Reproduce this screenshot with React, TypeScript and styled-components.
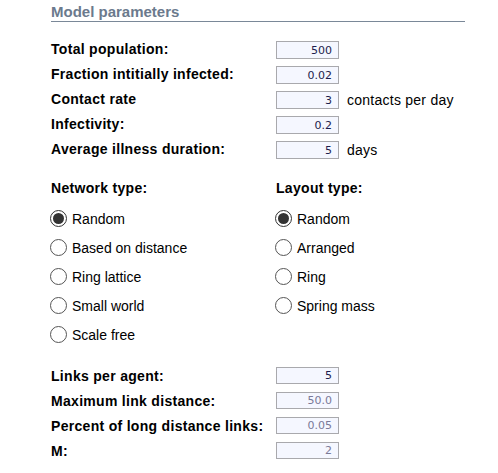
import React from "react";
import styled, { createGlobalStyle } from "styled-components";

const GlobalStyle = createGlobalStyle`
  html, body { margin: 0; padding: 0; background: #ffffff; }
  body { font-family: "Liberation Sans", Arial, sans-serif; color: #000; }
`;

const Panel = styled.div`
  width: 414px;
  padding: 4px 0 0 51px;
`;

const Header = styled.div`
  font-size: 15px;
  line-height: 16px;
  font-weight: bold;
  color: #6b7a8d;
  padding-bottom: 1px;
  border-bottom: 1px solid #7a8898;
`;

const ParamList = styled.div<{ $top: number }>`
  display: flex;
  flex-direction: column;
  margin-top: ${(p) => p.$top}px;
`;

const Row = styled.div`
  display: grid;
  grid-template-columns: 225px 63px auto;
  align-items: start;
  height: 25px;
`;

const Label = styled.div<{ $offset: number }>`
  font-size: 14px;
  line-height: 16px;
  font-weight: bold;
  letter-spacing: 0.3px;
  padding-top: ${(p) => p.$offset}px;
  white-space: nowrap;
`;

const Field = styled.div<{ $disabled?: boolean; $h: number }>`
  box-sizing: border-box;
  margin-top: 1px;
  height: ${(p) => p.$h}px;
  border: 1px solid #a9a9ad;
  background: #f5f7ff;
  display: flex;
  align-items: center;
  justify-content: flex-end;
  padding-right: 6px;
  font-family: "DejaVu Sans", Verdana, sans-serif;
  font-size: 11px;
  color: ${(p) => (p.$disabled ? "#7a7a98" : "#1d1d4d")};
`;

const Unit = styled.div`
  font-size: 14px;
  line-height: 16px;
  letter-spacing: 0.25px;
  margin-left: 8px;
  margin-top: 2px;
  white-space: nowrap;
`;

const Choices = styled.div`
  display: grid;
  grid-template-columns: 225px auto;
  margin-top: 15px;
`;

const Group = styled.div`
  display: flex;
  flex-direction: column;
`;

const GroupTitle = styled.div`
  font-size: 14px;
  line-height: 16px;
  font-weight: bold;
  letter-spacing: 0.3px;
  margin-bottom: 8px;
`;

const Option = styled.div`
  display: flex;
  align-items: center;
  height: 29px;
  margin-left: -1px;
  font-size: 14px;
  line-height: 16px;
`;

const Dot = styled.span<{ $on?: boolean }>`
  box-sizing: border-box;
  width: 17px;
  height: 17px;
  border-radius: 50%;
  border: 1px solid ${(p) => (p.$on ? "#333" : "#555")};
  background: #fff;
  margin-right: 5px;
  display: flex;
  align-items: center;
  justify-content: center;
  flex: none;
  &::after {
    content: "";
    display: ${(p) => (p.$on ? "block" : "none")};
    width: 11px;
    height: 11px;
    border-radius: 50%;
    background: #333;
  }
`;

type Param = { label: string; value: string; unit?: string; disabled?: boolean };

const top: Param[] = [
  { label: "Total population:", value: "500" },
  { label: "Fraction intitially infected:", value: "0.02" },
  { label: "Contact rate", value: "3", unit: "contacts per day" },
  { label: "Infectivity:", value: "0.2" },
  { label: "Average illness duration:", value: "5", unit: "days" },
];

const bottom: Param[] = [
  { label: "Links per agent:", value: "5" },
  { label: "Maximum link distance:", value: "50.0", disabled: true },
  { label: "Percent of long distance links:", value: "0.05", disabled: true },
  { label: "M:", value: "2", disabled: true },
];

const network = ["Random", "Based on distance", "Ring lattice", "Small world", "Scale free"];
const layout = ["Random", "Arranged", "Ring", "Spring mass"];

const Params = ({ items, offset, top: mt, h }: { items: Param[]; offset: number; top: number; h: number }) => (
  <ParamList $top={mt}>
    {items.map((p) => (
      <Row key={p.label}>
        <Label $offset={offset}>{p.label}</Label>
        <Field $disabled={p.disabled} $h={h}>{p.value}</Field>
        {p.unit ? <Unit>{p.unit}</Unit> : <span />}
      </Row>
    ))}
  </ParamList>
);

export default function App() {
  return (
    <>
      <GlobalStyle />
      <Panel>
        <Header>Model parameters</Header>
        <Params items={top} offset={1} top={18} h={18} />
        <Choices>
          <Group>
            <GroupTitle>Network type:</GroupTitle>
            {network.map((n, i) => (
              <Option key={n}>
                <Dot $on={i === 0} />
                {n}
              </Option>
            ))}
          </Group>
          <Group>
            <GroupTitle>Layout type:</GroupTitle>
            {layout.map((n, i) => (
              <Option key={n}>
                <Dot $on={i === 0} />
                {n}
              </Option>
            ))}
          </Group>
        </Choices>
        <Params items={bottom} offset={2} top={17} h={17} />
      </Panel>
    </>
  );
}
